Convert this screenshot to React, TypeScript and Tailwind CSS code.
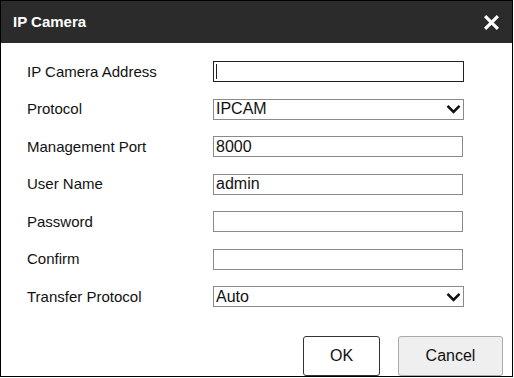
const rows: { label: string; kind: "text" | "select" | "focus"; value: string }[] = [
  { label: "IP Camera Address", kind: "focus", value: "" },
  { label: "Protocol", kind: "select", value: "IPCAM" },
  { label: "Management Port", kind: "text", value: "8000" },
  { label: "User Name", kind: "text", value: "admin" },
  { label: "Password", kind: "text", value: "" },
  { label: "Confirm", kind: "text", value: "" },
  { label: "Transfer Protocol", kind: "select", value: "Auto" },
];

const Chevron = () => (
  <svg width="15" height="10" viewBox="0 0 15 10" className="mr-[2px]">
    <path d="M1.5 1.8 L7.5 7.8 L13.5 1.8" fill="none" stroke="#111" strokeWidth="2.6" />
  </svg>
);

const App = () => {
  return (
    <div className="w-[513px] h-[377px] border border-black bg-white flex flex-col font-['Liberation_Sans',Arial,sans-serif]">
      <div className="h-[42px] bg-[#2b2b2b] flex items-center justify-between pl-[12px] pr-[12px] shrink-0">
        <span className="text-white font-bold text-[15px]">IP Camera</span>
        <svg width="17" height="17" viewBox="0 0 16 16">
          <path d="M2 2 L14 14 M14 2 L2 14" stroke="#fff" strokeWidth="3" />
        </svg>
      </div>
      <div className="flex flex-col pt-[10px] pl-[26px]">
        {rows.map((r) => (
          <div key={r.label} className="flex items-center h-[37.5px]">
            <span className="w-[186px] text-[15px] text-[#111]">{r.label}</span>
            {r.kind === "select" ? (
              <div className="w-[251px] h-[21px] border border-[#8a8a8a] flex items-center justify-between pl-[2px]">
                <span className="text-[16px] text-[#111] leading-none">{r.value}</span>
                <Chevron />
              </div>
            ) : r.kind === "focus" ? (
              <div className="w-[251px] h-[21px] border border-[#222] flex items-center pl-[2px]">
                <span className="w-px h-[15px] bg-[#222]" />
              </div>
            ) : (
              <div className="w-[250px] h-[21px] border border-[#8a8a8a] flex items-center pl-[2px]">
                <span className="text-[16px] text-[#111] leading-none">{r.value}</span>
              </div>
            )}
          </div>
        ))}
      </div>
      <div className="flex justify-end gap-[18px] pr-[9px] mt-auto mb-0">
        <button className="w-[77px] h-[40px] border border-[#333] rounded-[3px] bg-white text-[16px] text-[#111]">
          OK
        </button>
        <button className="w-[105px] h-[40px] border border-[#aaa] rounded-[3px] bg-[#efefef] text-[16px] text-[#111]">
          Cancel
        </button>
      </div>
    </div>
  );
};

export default App;
